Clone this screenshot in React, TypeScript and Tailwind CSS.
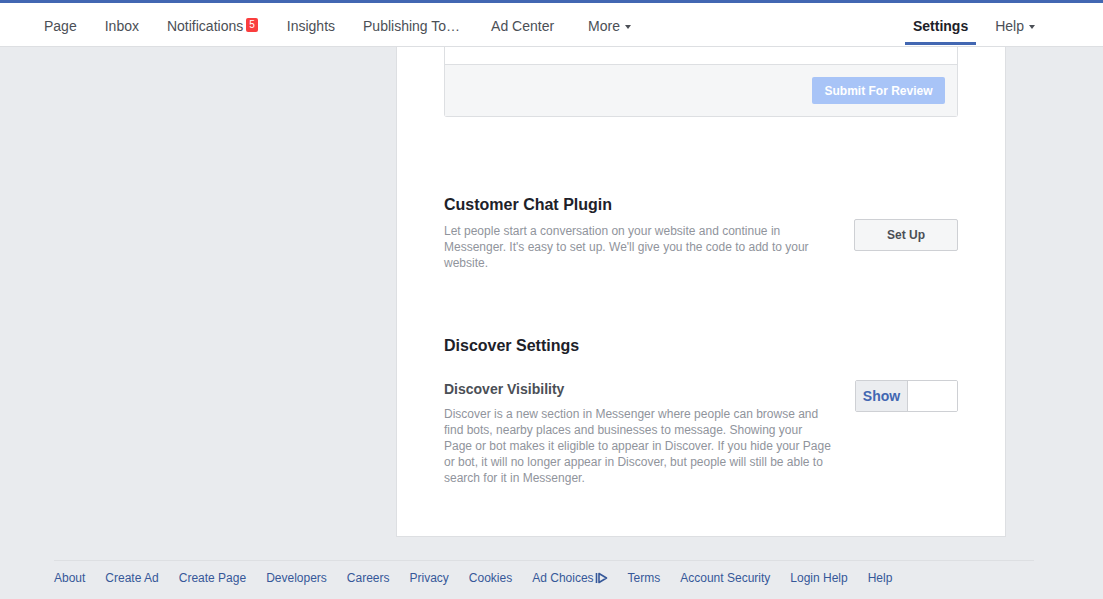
import { FunctionComponent } from "react";

const navLeft = [
    { label: "Page", ml: "" },
    { label: "Inbox", ml: "" },
    { label: "Notifications", ml: "" },
    { label: "Insights", ml: "ml-[1px]" },
    { label: "Publishing To\u2026", ml: "" },
    { label: "Ad Center", ml: "ml-[3px]" },
];

const footerLinks = [
    "About",
    "Create Ad",
    "Create Page",
    "Developers",
    "Careers",
    "Privacy",
    "Cookies",
    "Ad Choices",
    "Terms",
    "Account Security",
    "Login Help",
    "Help",
];

const Caret = () => (
    <svg width="6" height="4" viewBox="0 0 6 4" className="ml-[5px] mt-[1px]">
        <path d="M0 0h6L3 4z" fill="#4b4f56" />
    </svg>
);

const AdChoicesIcon = () => (
    <svg width="13" height="12" viewBox="0 0 13 12" className="ml-[1px]">
        <path d="M1.5 1v10" stroke="#365899" strokeWidth="1.6" />
        <path d="M4 1.5L11.5 6L4 10.5z" fill="none" stroke="#365899" strokeWidth="1.6" strokeLinejoin="round" />
    </svg>
);

const App: FunctionComponent = () => {
    return (
        <div className="min-h-[599px] bg-[#e9ebee] font-['Liberation_Sans',Arial,sans-serif]">
            {/* top nav */}
            <div className="border-t-[3px] border-[#4267b2] bg-white border-b border-b-[#dddfe2]">
                <div className="h-[43px] flex items-stretch pl-[44px] pr-[68px] text-[14px] text-[#4b4f56]">
                    <div className="flex items-stretch gap-[28px]">
                        {navLeft.map((item, i) => (
                            <div key={i} className={`flex items-center pt-[3px] ${item.ml}`}>
                                {item.label}
                                {item.label === "Notifications" && (
                                    <span className="ml-[3px] bg-[#fa3e3e] text-white text-[10px] leading-[14px] h-[14px] px-[3px] rounded-[2px] -mt-[2px]">
                                        5
                                    </span>
                                )}
                            </div>
                        ))}
                        <div className="flex items-center pt-[3px] ml-[6px]">
                            More
                            <Caret />
                        </div>
                    </div>
                    <div className="ml-auto flex items-stretch">
                        <div className="relative flex items-center pt-[3px] px-[8px] font-bold text-[#1d2129]">
                            Settings
                            <div className="absolute left-0 right-0 bottom-[1px] h-[3px] bg-[#4267b2]"></div>
                        </div>
                        <div className="flex items-center pt-[3px] ml-[19px]">
                            Help
                            <Caret />
                        </div>
                    </div>
                </div>
            </div>

            <div className="w-[980px] ml-[54px]">
                {/* main card */}
                <div className="ml-[342px] w-[610px] bg-white border-x border-b border-[#dddfe2] px-[47px] pb-[50px]">
                    <div className="border-x border-b border-[#dddfe2] rounded-b-[3px]">
                        <div className="h-[17px] bg-white"></div>
                        <div className="border-t border-[#dddfe2] bg-[#f5f6f7] flex justify-end pr-[12px] pt-[12px] pb-[12px]">
                            <button className="h-[27px] w-[133px] rounded-[2px] bg-[#a8c4f7] text-white text-[12px] font-bold">
                                Submit For Review
                            </button>
                        </div>
                    </div>

                    <div className="mt-[78px] flex items-start justify-between">
                        <div>
                            <h2 className="text-[16px] leading-[20px] font-bold text-[#1d2129]">Customer Chat Plugin</h2>
                            <p className="mt-[8px] w-[388px] text-[12px] leading-[16px] text-[#90949c]">
                                Let people start a conversation on your website and continue in Messenger. It's easy to set up. We'll give you the code to add to your website.
                            </p>
                        </div>
                        <button className="mt-[24px] w-[104px] h-[32px] bg-[#f5f6f7] border border-[#ced0d4] rounded-[2px] text-[12px] font-bold text-[#4b4f56]">
                            Set Up
                        </button>
                    </div>

                    <h2 className="mt-[65px] text-[16px] leading-[20px] font-bold text-[#1d2129]">Discover Settings</h2>

                    <div className="mt-[24px] flex items-start justify-between">
                        <div>
                            <h3 className="text-[14px] leading-[18px] font-bold text-[#4b4f56]">Discover Visibility</h3>
                            <p className="mt-[8px] w-[388px] text-[12px] leading-[16px] text-[#90949c]">
                                Discover is a new section in Messenger where people can browse and find bots, nearby places and businesses to message. Showing your Page or bot makes it eligible to appear in Discover. If you hide your Page or bot, it will no longer appear in Discover, but people will still be able to search for it in Messenger.
                            </p>
                        </div>
                        <div className="flex w-[103px] h-[32px] border border-[#ced0d4] rounded-[2px] overflow-hidden">
                            <div className="w-[52px] bg-[#ebedf0] border-r border-[#ced0d4] flex items-center justify-center text-[14px] font-bold text-[#4267b2]">
                                Show
                            </div>
                            <div className="flex-1 bg-white"></div>
                        </div>
                    </div>
                </div>

                {/* footer */}
                <div className="mt-[23px] border-t border-[#dddfe2] pt-[9px] flex gap-[20px] text-[12px] leading-[16px] text-[#365899]">
                    {footerLinks.map((link, i) => (
                        <span key={i} className="flex items-center">
                            {link}
                            {link === "Ad Choices" && <AdChoicesIcon />}
                        </span>
                    ))}
                </div>
            </div>
        </div>
    );
};

export default App;
